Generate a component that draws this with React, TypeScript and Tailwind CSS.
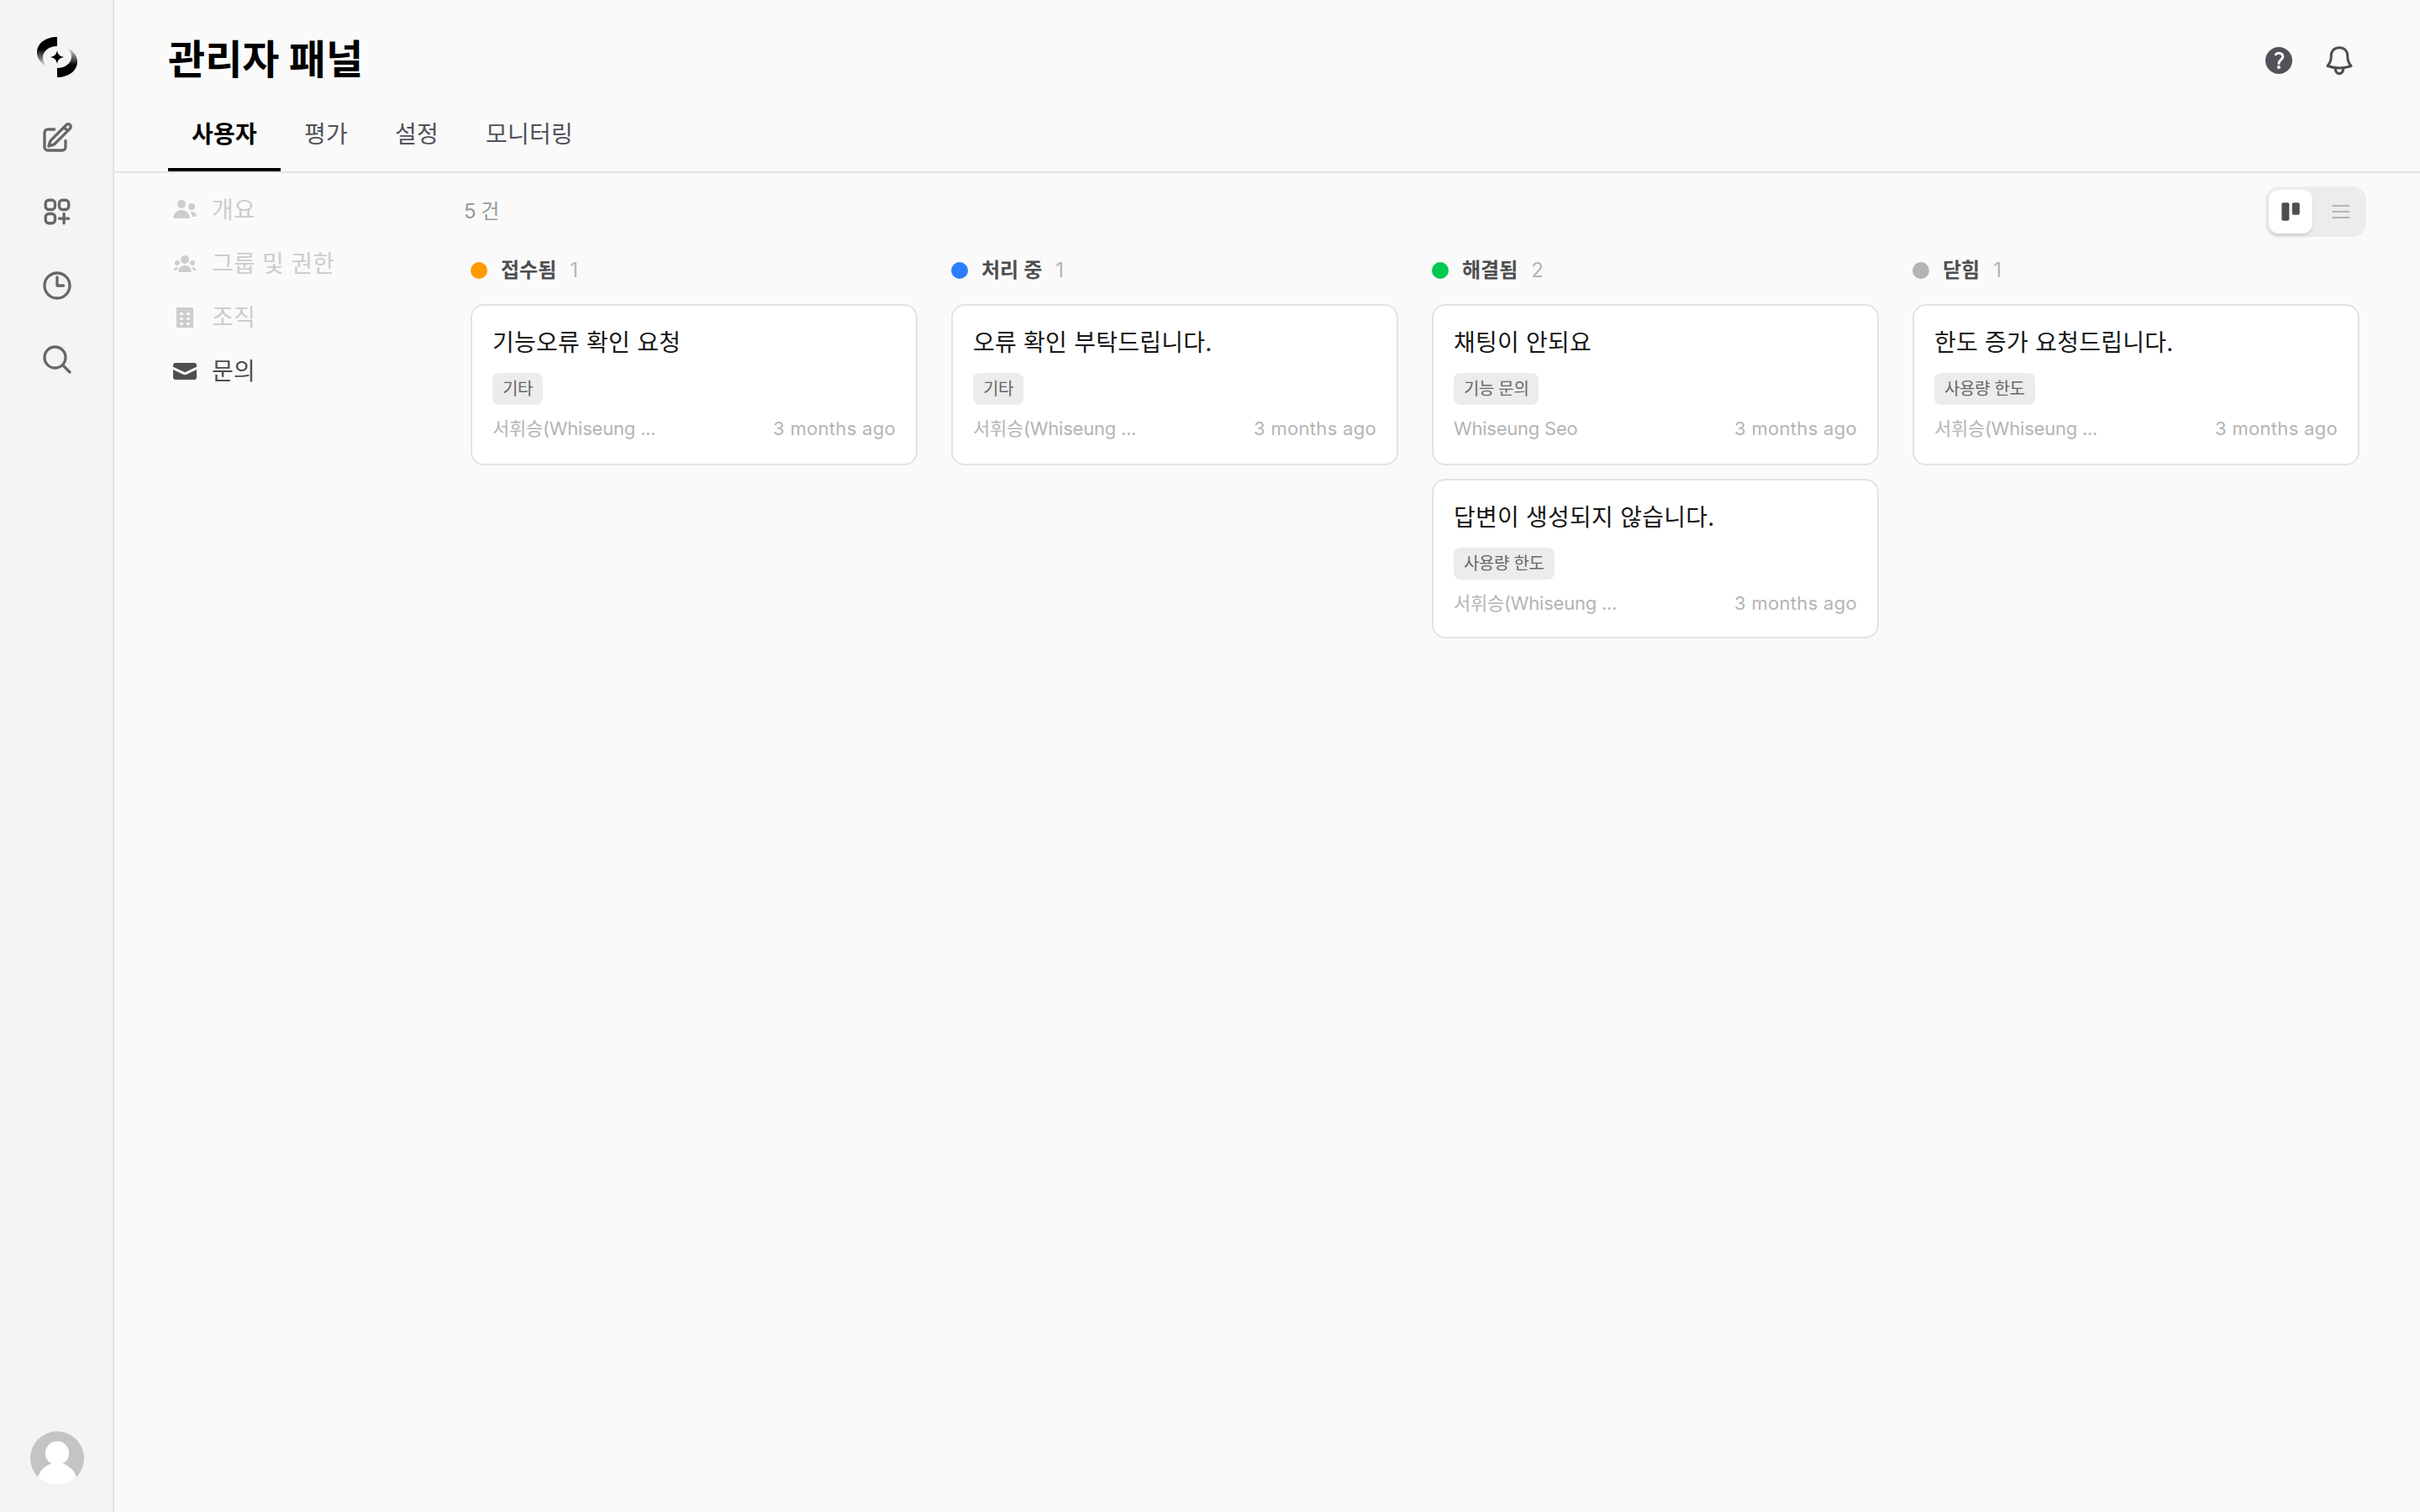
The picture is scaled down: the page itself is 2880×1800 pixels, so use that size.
import React from 'react';

const tabs = ['사용자', '평가', '설정', '모니터링'];

type Ticket = { title: string; tag: string; author: string; time: string };
type Column = { name: string; dot: string; tickets: Ticket[] };

const author = '서휘승(Whiseung ...';
const time = '3 months ago';

const columns: Column[] = [
  { name: '접수됨', dot: 'bg-[#ff9900]', tickets: [{ title: '기능오류 확인 요청', tag: '기타', author, time }] },
  { name: '처리 중', dot: 'bg-[#2b7fff]', tickets: [{ title: '오류 확인 부탁드립니다.', tag: '기타', author, time }] },
  {
    name: '해결됨',
    dot: 'bg-[#00c950]',
    tickets: [
      { title: '채팅이 안되요', tag: '기능 문의', author: 'Whiseung Seo', time },
      { title: '답변이 생성되지 않습니다.', tag: '사용량 한도', author, time },
    ],
  },
  { name: '닫힘', dot: 'bg-[#b4b4b4]', tickets: [{ title: '한도 증가 요청드립니다.', tag: '사용량 한도', author, time }] },
];

function Logo() {
  const arc = 'M24 0C10 0 0 8 0 18.5C0 26 5 32 12 35C8.500 32 7 28 7 24.500C7 17 14 11 24 11Z';
  return (
    <svg className="size-12" viewBox="0 0 48 48">
      <defs>
        <linearGradient id="fade" x1="0" y1="0" x2="0" y2="36" gradientUnits="userSpaceOnUse">
          <stop offset="0.4" stopColor="#000" />
          <stop offset="1" stopColor="#000" stopOpacity="0" />
        </linearGradient>
      </defs>
      <path d={arc} fill="url(#fade)" />
      <path d={arc} fill="url(#fade)" transform="rotate(180 24 24)" />
      <path d="M24 16C25 21 27 23 32 24C27 25 25 27 24 32C23 27 21 25 16 24C21 23 23 21 24 16Z" />
    </svg>
  );
}

function NavIcon({ d }: { d: string }) {
  return (
    <button className="flex size-[88px] items-center justify-center text-[#676767]">
      <svg className="size-10" viewBox="0 0 24 24" fill="none" stroke="currentColor" strokeWidth="2" strokeLinecap="round" strokeLinejoin="round">
        <path d={d} />
      </svg>
    </button>
  );
}

const navIcons = [
  'm16.862 4.487 1.687-1.688a1.875 1.875 0 1 1 2.652 2.652L10.582 16.07a4.5 4.5 0 0 1-1.897 1.13L6 18l.8-2.685a4.5 4.5 0 0 1 1.13-1.897l8.932-8.931Zm0 0L19.5 7.125M18 14v4.75A2.25 2.25 0 0 1 15.75 21H5.25A2.25 2.25 0 0 1 3 18.75V8.25A2.25 2.25 0 0 1 5.25 6H10',
  'M13.5 16.875h3.375m0 0h3.375m-3.375 0V13.5m0 3.375v3.375M6 10.5h2.25a2.25 2.25 0 0 0 2.25-2.25V6A2.25 2.25 0 0 0 8.25 3.75H6A2.25 2.25 0 0 0 3.75 6v2.25A2.25 2.25 0 0 0 6 10.5Zm0 9.75h2.25A2.25 2.25 0 0 0 10.5 18v-2.25a2.25 2.25 0 0 0-2.25-2.25H6a2.25 2.25 0 0 0-2.25 2.25V18A2.25 2.25 0 0 0 6 20.25Zm9.75-9.75H18a2.25 2.25 0 0 0 2.25-2.25V6A2.25 2.25 0 0 0 18 3.75h-2.25A2.25 2.25 0 0 0 13.5 6v2.25a2.25 2.25 0 0 0 2.25 2.25Z',
  'M12 6v6h4.5m4.5 0a9 9 0 1 1-18 0 9 9 0 0 1 18 0Z',
  'm21 21-5.197-5.197m0 0A7.5 7.5 0 1 0 5.196 5.196a7.5 7.5 0 0 0 10.607 10.607Z',
];

function Avatar() {
  return (
    <svg className="size-16" viewBox="0 0 64 64">
      <clipPath id="avatar">
        <circle cx="32" cy="32" r="32" />
      </clipPath>
      <g clipPath="url(#avatar)">
        <rect width="64" height="64" fill="#c4c4c4" />
        <circle cx="32" cy="26" r="14.200" fill="#fff" />
        <circle cx="32" cy="61.500" r="24" fill="#fff" />
      </g>
    </svg>
  );
}

const menu = [
  {
    label: '개요',
    d: 'M8.5 4.5a2.5 2.5 0 1 1-5 0 2.5 2.5 0 0 1 5 0ZM10.9 12.006c.11.542-.348.994-.9.994H2c-.553 0-1.01-.452-.902-.994a5.002 5.002 0 0 1 9.803 0ZM14.002 12h-1.59a2.556 2.556 0 0 0-.04-.29 6.476 6.476 0 0 0-1.167-2.603 3.002 3.002 0 0 1 3.633 1.911c.18.522-.283.982-.836.982ZM12 8a2 2 0 1 0 0-4 2 2 0 0 0 0 4Z',
  },
  {
    label: '그룹 및 권한',
    d: 'M8 8a2.5 2.5 0 1 0 0-5 2.5 2.5 0 0 0 0 5ZM3.156 11.763c.16-.629.44-1.21.813-1.72a2.5 2.5 0 0 0-2.725 1.377c-.136.287.102.58.418.58h1.449c.01-.077.025-.156.045-.237ZM12.847 11.763c.02.08.036.16.046.237h1.446c.316 0 .554-.293.417-.579a2.5 2.5 0 0 0-2.722-1.378c.374.51.653 1.09.813 1.72ZM14 7.5a1.5 1.5 0 1 1-3 0 1.5 1.5 0 0 1 3 0ZM3.5 9a1.5 1.5 0 1 0 0-3 1.5 1.5 0 0 0 0 3ZM5 13c-.552 0-1.013-.455-.876-.99a4.002 4.002 0 0 1 7.753 0c.136.535-.324.99-.877.99H5Z',
  },
  {
    label: '조직',
    d: 'M3.5 2h9a.5.5 0 0 1 .5.5v11a.5.5 0 0 1-.5.5h-9a.5.5 0 0 1-.5-.5v-11a.5.5 0 0 1 .5-.5ZM5.7 5a.75.75 0 0 0 0 1.5h.6a.75.75 0 0 0 0-1.5Zm4 0a.75.75 0 0 0 0 1.5h.6a.75.75 0 0 0 0-1.5Zm-4 3a.75.75 0 0 0 0 1.5h.6a.75.75 0 0 0 0-1.5Zm4 0a.75.75 0 0 0 0 1.5h.6a.75.75 0 0 0 0-1.5Zm-4 3a.75.75 0 0 0 0 1.5h.6a.75.75 0 0 0 0-1.5Zm4 0a.75.75 0 0 0 0 1.5h.6a.75.75 0 0 0 0-1.5Z',
  },
  {
    label: '문의',
    active: true,
    d: 'M2.5 3A1.5 1.5 0 0 0 1 4.5v.793c.026.009.051.02.076.032L7.674 8.51c.206.1.446.1.652 0l6.598-3.185A.755.755 0 0 1 15 5.293V4.5A1.5 1.5 0 0 0 13.5 3h-11ZM15 6.954 8.978 9.86a2.25 2.25 0 0 1-1.956 0L1 6.954V11.5A1.5 1.5 0 0 0 2.5 13h11a1.5 1.5 0 0 0 1.5-1.5V6.954Z',
  },
];

function Card({ ticket, last }: { ticket: Ticket; last: boolean }) {
  return (
    <div className={`${last ? 'h-[190px]' : 'h-48'} rounded-2xl border-2 border-[#e3e3e3] bg-white px-6 pt-6`}>
      <div className="text-[28px] leading-10 tracking-[0.24px] text-[#171717]">{ticket.title}</div>
      <div className="mt-4 flex">
        <span className="h-[38px] rounded-lg bg-[#ececec] px-3 text-[20px] leading-[38px] tracking-[-0.35px] text-[#676767]">{ticket.tag}</span>
      </div>
      <div className="mt-3 flex items-center justify-between text-[22px] leading-8 text-[#b4b4b4]">
        <span className="tracking-[-0.23px]">{ticket.author}</span>
        <span className="tracking-[0.3px]">{ticket.time}</span>
      </div>
    </div>
  );
}

export default function App() {
  return (
    <div className="flex h-[1800px] w-[2880px] overflow-hidden bg-[#fafafa] font-['Inter','Noto_Sans_CJK_KR',sans-serif]">
      <aside className="flex w-[136px] shrink-0 flex-col items-center border-r-2 border-[#e4e4e7] bg-[#f3f4f6] pl-0.5 pt-11 pb-8">
        <Logo />
        <nav className="mt-7 flex flex-col">
          {navIcons.map((d) => (
            <NavIcon key={d} d={d} />
          ))}
        </nav>
        <div className="mt-auto">
          <Avatar />
        </div>
      </aside>
      <div className="flex min-w-0 flex-1 flex-col">
        <header className="flex h-[206px] flex-col justify-between border-b-2 border-[#e4e4e7] pl-16">
          <div className="flex items-center justify-between pt-[34px] pr-20">
            <h1 className="pb-0.5 text-[48px] leading-[74px] font-bold text-black">관리자 패널</h1>
            <div className="flex items-center gap-10">
              <svg className="size-8" viewBox="0 0 32 32">
                <circle cx="16" cy="16" r="16" fill="#52525b" />
                <path d="M12.300 8.700C14.500 6.500 20.800 6.800 20.800 11.500C20.800 15 16 15.300 16 19.500" fill="none" stroke="#fafafa" strokeWidth="3" strokeLinecap="round" />
                <circle cx="16" cy="24" r="2.100" fill="#fafafa" />
              </svg>
              <svg className="size-8 overflow-visible" viewBox="0 0 32 32" fill="none" stroke="#4e4e4e" strokeWidth="3" strokeLinejoin="round">
                <path d="M16 0.700C10 0.700 6.200 5 6.200 10.500V12C6.200 16.500 4.500 19.500 2 22.500C11 25.800 21 25.800 30 22.500C27.500 19.500 25.800 16.500 25.800 12V10.500C25.800 5 22 0.700 16 0.700Z" />
                <path d="M11.200 25.500C12 33.800 20 33.800 20.800 25.500" />
              </svg>
            </div>
          </div>
          <nav className="flex text-[28px] leading-[42px] tracking-[0.24px] text-[#52525b]">
            {tabs.map((tab, i) => (
              <button
                key={tab}
                className={`border-b-4 px-7 pb-[19px] ${i === 0 ? 'border-black font-semibold text-black' : 'border-transparent'}`}
              >
                {tab}
              </button>
            ))}
          </nav>
        </header>
        <main className="flex flex-1 pt-3 pr-16 pl-[68px]">
          <nav className="flex w-[348px] shrink-0 flex-col">
            {menu.map((item) => (
              <a key={item.label} className={`flex h-16 items-center gap-4 text-[28px] leading-10 tracking-[0.24px] ${item.active ? 'text-[#4e4e4e]' : 'text-[#cdcdcd]'}`}>
                <svg className="size-8" viewBox="0 0 16 16" fill="currentColor" fillRule="evenodd">
                  <path d={item.d} />
                </svg>
                <span>{item.label}</span>
              </a>
            ))}
          </nav>
          <section className="flex-1">
            <div className="flex items-center justify-between pt-1">
              <span className="text-[24px] leading-8 tracking-[-0.5px] text-[#9b9b9b]">5 건</span>
              <div className="flex h-[60px] w-[120px] items-center justify-between rounded-2xl bg-[#ececec] p-1">
                <button className="flex size-[52px] items-center justify-center rounded-xl bg-white shadow-md">
                  <svg className="size-6" viewBox="0 0 24 24" fill="#4e4e4e">
                    <rect x="1.400" y="1.200" width="9" height="21.500" rx="2" />
                    <rect x="13.800" y="1.200" width="9" height="14.500" rx="2" />
                  </svg>
                </button>
                <button className="flex size-[52px] items-center justify-center">
                  <svg className="size-6" viewBox="0 0 24 24" stroke="#b4b4b4" strokeWidth="2" strokeLinecap="round">
                    <path d="M2.500 5h19M2.500 12h19M2.500 19h19" />
                  </svg>
                </button>
              </div>
            </div>
            <div className="mt-4 grid grid-cols-4 gap-6">
              {columns.map((col) => (
                <div key={col.name} className="px-2">
                  <div className="flex h-12 items-center text-[24px] leading-8">
                    <span className={`size-5 rounded-full ${col.dot}`} />
                    <span className="ml-4 font-semibold text-[#4e4e4e]">{col.name}</span>
                    <span className="ml-4 text-[#b4b4b4]">{col.tickets.length}</span>
                  </div>
                  <div className="mt-4 flex flex-col gap-4">
                    {col.tickets.map((t, i) => (
                      <Card key={t.title} ticket={t} last={i === 1} />
                    ))}
                  </div>
                </div>
              ))}
            </div>
          </section>
        </main>
      </div>
    </div>
  );
}
